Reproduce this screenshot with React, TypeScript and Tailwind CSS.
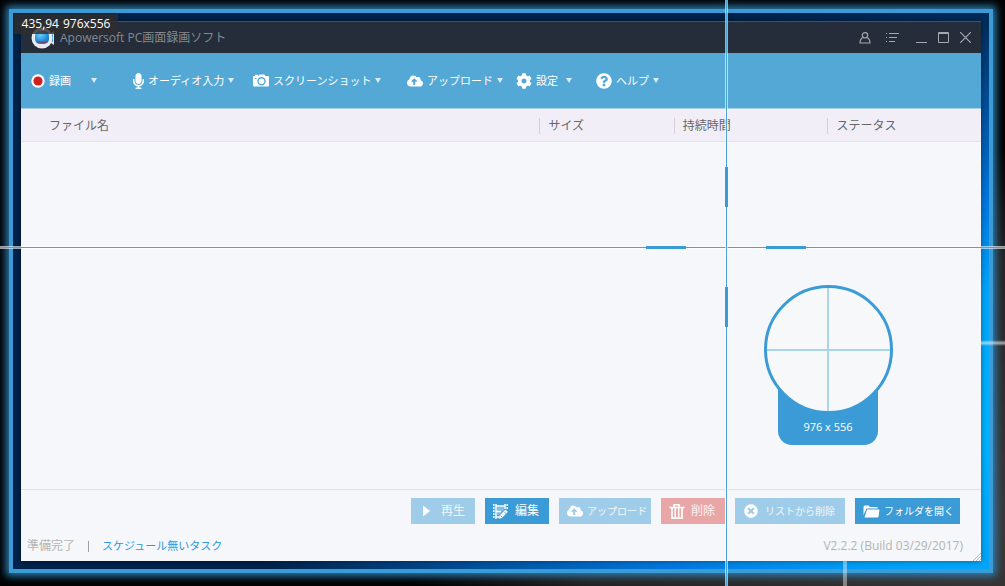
import type { ReactNode } from "react";
import { FaCloudUploadAlt, FaCog, FaMicrophone, FaQuestionCircle, FaTimesCircle } from "react-icons/fa";

const BLUE = "#3b9bd6";

function AppLogo() {
  return (
    <svg width="24" height="22" viewBox="0 0 24 22">
      <defs>
        <radialGradient id="lens" cx="0.4" cy="0.3" r="0.8">
          <stop offset="0" stopColor="#6fcdf8" />
          <stop offset="0.6" stopColor="#2590da" />
          <stop offset="1" stopColor="#1b66a8" />
        </radialGradient>
      </defs>
      <path d="M17 8.500 L23 4 V18 L17 14z" fill="#dfe6ee" />
      <path d="M19 9 L22 7 V15 L19 13z" fill="#2f93d4" />
      <circle cx="11" cy="11" r="10.500" fill="#e8ebf1" />
      <rect x="4" y="4" width="14" height="13" rx="5" fill="url(#lens)" />
      <path d="M6 15.500c3-1.500 7 .5 10-.5" stroke="#7d4a70" strokeWidth="1.500" fill="none" />
    </svg>
  );
}

function RecordIcon() {
  return (
    <svg width="14" height="14" viewBox="0 0 14 14">
      <circle cx="7" cy="7" r="6.700" fill="#fff" />
      <circle cx="7" cy="7" r="4.600" fill="#d2201f" />
    </svg>
  );
}

function CameraIcon() {
  return (
    <svg width="16" height="13" viewBox="0 0 16 13">
      <path
        fill="#fff"
        fillRule="evenodd"
        d="M1 2h1V.8h3V2h.5L6.500.500h5L12.500 2H15a1 1 0 0 1 1 1v8.500a1 1 0 0 1-1 1H1a1 1 0 0 1-1-1V3a1 1 0 0 1 1-1zM8.500 3a4.200 4.200 0 1 0 0 8.400a4.200 4.200 0 0 0 0-8.400zM2 4v1h1.500V4z"
      />
      <circle cx="8.500" cy="7.200" r="2.800" fill="#fff" />
    </svg>
  );
}

function PlayIcon() {
  return (
    <svg width="16" height="12" viewBox="0 0 16 12">
      <path d="M4 .5 L11 6 L4 11.500z" fill="#fff" />
    </svg>
  );
}

function FilmEditIcon() {
  return (
    <svg width="15" height="15" viewBox="0 0 15 15">
      <path d="M.8 0v15M14.200 0v6" stroke="#fff" strokeWidth="1.500" strokeDasharray="2 1" />
      <path d="M3 0v15M12 0v5" stroke="#fff" strokeWidth="1.500" />
      <path d="M3 2h9M3 7.500h5M3 13h3" stroke="#fff" strokeWidth="1.500" />
      <path d="M4 3h7v3L6 11H4z" fill="#fff" fillOpacity="0.350" />
      <path d="M12.500 5.500l2.300 2.200-5.800 6.300-3.200.8.700-3.300z" fill="#fff" />
      <path d="M7.500 11.500l2 2M11 7.500l2 2" stroke="#3b9bd6" strokeWidth="0.800" />
    </svg>
  );
}

function TrashIcon() {
  return (
    <svg width="16" height="15" viewBox="0 0 16 15" fill="none" stroke="#fff">
      <path d="M0.500 3.500h15" strokeWidth="1.600" />
      <path d="M5 3V.8h5V3" strokeWidth="1.500" />
      <path d="M3 3.500v10.700h10V3.500" strokeWidth="1.700" />
      <path d="M6.200 4v9M9.700 4v9" strokeWidth="1.500" />
    </svg>
  );
}

function FolderIcon() {
  return (
    <svg width="17" height="13" viewBox="0 0 17 13" fill="#fff">
      <path d="M.5 10V2a1.500 1.500 0 0 1 1.500-1.500h3.500L7 2h7.500v1.500H3.500z" />
      <path d="M4 4.500h12.500l-1 7.200a1 1 0 0 1-1 .8H1.500z" />
    </svg>
  );
}

type MenuProps = { icon: ReactNode; label: string; slot: string; arrow?: string };

function MenuButton({ icon, label, slot, arrow = "ml-1" }: MenuProps) {
  return (
    <div className={`shrink-0 ${slot}`}>
      <button className="flex items-center whitespace-nowrap text-[11px] leading-4 text-white">
        <span className="mr-1 flex">{icon}</span>
        {label}
        <svg className={arrow} width="6" height="5" viewBox="0 0 6 5">
          <path d="M0 0h6L3 5z" fill="#d9edf8" />
        </svg>
      </button>
    </div>
  );
}

type ActionProps = { icon: ReactNode; label: string; look: string; disabled?: boolean };

function ActionButton({ icon, label, look, disabled }: ActionProps) {
  return (
    <button
      disabled={disabled}
      className={`flex h-[26px] shrink-0 items-center justify-between whitespace-nowrap pl-2 leading-4 ${look}`}
    >
      {icon}
      {label}
    </button>
  );
}

function TitleBar() {
  return (
    <header className="flex h-8 items-center border-t border-[#48505b] bg-[#242d39] pl-[10px] pr-[10px] text-xs text-[#858a90]">
      <AppLogo />
      <h1 className="ml-[5px] flex-1 leading-4">Apowersoft PC画面録画ソフト</h1>
      <div className="flex items-center gap-[11px]">
        <button aria-label="アカウント" className="mr-1">
          <svg width="12" height="12" viewBox="0 0 12 12" fill="none" stroke="#a4a9af" strokeWidth="1.200">
            <circle cx="6" cy="3.300" r="2.700" />
            <path d="M4 5.500C2 6.500 1 8 1 11h10c0-3-1-4.500-3-5.500" />
          </svg>
        </button>
        <button aria-label="メニュー" className="mr-1.5">
          <svg width="13" height="11" viewBox="0 0 13 11" stroke="#a4a9af">
            <path d="M0 1.500h1M3 1.500h10M0 5.500h1M3 5.500h8M0 9.500h1M3 9.500h6" />
          </svg>
        </button>
        <button aria-label="最小化">
          <svg width="11" height="11" viewBox="0 0 11 11" stroke="#a4a9af">
            <path d="M0 10.500h11" />
          </svg>
        </button>
        <button aria-label="最大化">
          <svg width="11" height="11" viewBox="0 0 11 11" fill="none" stroke="#a4a9af">
            <path d="M.5.5h10v10H.5zM0 1.500h11" />
          </svg>
        </button>
        <button aria-label="閉じる">
          <svg width="11" height="11" viewBox="0 0 11 11" stroke="#a4a9af" strokeWidth="1.200">
            <path d="M0 0l11 11M11 0L0 11" />
          </svg>
        </button>
      </div>
    </header>
  );
}

function Toolbar() {
  return (
    <nav className="flex h-14 items-center border-b border-[#a9d0e3] bg-[#54a8d6] pl-[10px]">
      <MenuButton slot="w-[102px]" icon={<RecordIcon />} label="録画" arrow="ml-5" />
      <MenuButton slot="w-[120px]" icon={<FaMicrophone className="h-4 w-[11px]" />} label="オーディオ入力" />
      <MenuButton slot="w-[154px]" icon={<CameraIcon />} label="スクリーンショット" />
      <MenuButton slot="w-[109px]" icon={<FaCloudUploadAlt className="h-4 w-4" />} label="アップロード" />
      <MenuButton slot="w-[80px]" icon={<FaCog className="h-4 w-4" />} label="設定" arrow="ml-2" />
      <MenuButton slot="w-[80px]" icon={<FaQuestionCircle className="h-4 w-4" />} label="ヘルプ" />
    </nav>
  );
}

function FileTable() {
  const columns = [
    { label: "サイズ", width: "w-[14%]" },
    { label: "持続時間", width: "w-[16%]" },
    { label: "ステータス", width: "w-[16%]" },
  ];
  return (
    <main className="flex-1">
      <table className="w-full table-fixed text-left text-xs text-[#666]">
        <thead>
          <tr className="h-8 border-b border-[#dbe5ec] bg-[#f1eef8]">
            <th className="p-0 pl-7 pt-0.5 font-normal">ファイル名</th>
            {columns.map((c) => (
              <th key={c.label} className={`p-0 pt-0.5 font-normal ${c.width}`}>
                <div className="border-l border-[#d2d2d6] pl-2 leading-4">{c.label}</div>
              </th>
            ))}
          </tr>
        </thead>
      </table>
    </main>
  );
}

function Footer() {
  const soft = "bg-[#9fcce8] text-white/85";
  return (
    <footer className="border-t border-[#dbe4e9] pt-2">
      <div className="flex justify-end gap-[10px] pr-[21px]">
        <ActionButton disabled look={`w-16 pr-[10px] text-xs ${soft}`} icon={<PlayIcon />} label="再生" />
        <ActionButton look="w-16 bg-[#3b9bd6] pr-[10px] text-xs text-white" icon={<FilmEditIcon />} label="編集" />
        <ActionButton disabled look={`w-[92px] pr-1 text-[10px] ${soft}`} icon={<FaCloudUploadAlt className="h-4 w-4 text-white" />} label="アップロード" />
        <ActionButton disabled look="w-16 bg-[#e8a6a6] pr-[10px] text-xs text-white/85" icon={<TrashIcon />} label="削除" />
        <ActionButton disabled look={`w-[110px] pr-[10px] text-[10px] ${soft}`} icon={<FaTimesCircle className="h-[14px] w-4 text-white" />} label="リストから削除" />
        <ActionButton look="w-[105px] pr-1.5 bg-[#3b9bd6] text-[10px] text-white" icon={<FolderIcon />} label="フォルダを開く" />
      </div>
      <div className="flex items-center px-[6px] pb-[7px] pt-[14px] text-xs leading-4 text-[#b4b4b4]">
        <span>準備完了</span>
        <span className="mx-[13px] h-[11px] w-px bg-[#a0a0a0]" />
        <a href="#schedule" className="text-[11px] text-[#2f96dc]">スケジュール無いタスク</a>
        <span className="ml-auto mr-3">V2.2.2 (Build 03/29/2017)</span>
      </div>
      <svg className="absolute bottom-0 right-0" width="8" height="8" viewBox="0 0 8 8" stroke="#b5b8bd">
        <path d="M0 8L8 0M3 8L8 3M6 8L8 6" />
      </svg>
    </footer>
  );
}

// full-screen guides with thick ticks round the cursor
function Crosshair() {
  return (
    <>
      <div className="absolute inset-x-0 top-[247px] h-px bg-[#4ba4d6] shadow-[0_-1px_rgba(255,255,255,0.6),0_1px_rgba(255,255,255,0.6)]" />
      <div className="absolute inset-y-0 left-[726px] w-px bg-[#4ba4d6] shadow-[-1px_0_rgba(255,255,255,0.6),1px_0_rgba(255,255,255,0.6)]" />
      <div className="absolute left-[646px] top-[246px] flex h-[3px] w-40 justify-between">
        <div className="w-10 bg-[#3b9bd6]" />
        <div className="w-10 bg-[#3b9bd6]" />
      </div>
      <div className="absolute left-[725px] top-[167px] flex h-40 w-[3px] flex-col justify-between">
        <div className="h-10 bg-[#3b9bd6]" />
        <div className="h-10 bg-[#3b9bd6]" />
      </div>
    </>
  );
}

function Magnifier() {
  return (
    <div className="absolute left-[764px] top-[285px] w-32">
      <svg className="block" width="129" height="160" viewBox="0 0 129 160">
        <path d="M14 95h100v51a14 14 0 0 1-14 14H28a14 14 0 0 1-14-14z" fill={BLUE} />
        <circle cx="64.500" cy="64.500" r="63" fill="#f6f8fa" stroke={BLUE} strokeWidth="3" />
        <path d="M3 65h123M64 3v124" stroke="#4ba8d6" strokeOpacity="0.450" strokeWidth="2" />
      </svg>
      <div className="absolute inset-x-0 bottom-[10px] text-center text-[11px] leading-4 text-white">976 x 556</div>
    </div>
  );
}

export default function App() {
  return (
    <div className="relative flex min-h-screen overflow-hidden bg-[radial-gradient(ellipse_60%_65%_at_100%_90%,#3b3838_0%,#242323_70%,#000_100%)] pb-[13px] pl-[9px] pr-3 pt-[9px] font-['Open_Sans','Noto_Sans_CJK_JP',sans-serif]">
      {/* light beams of the desktop wallpaper */}
      <div className="absolute right-0 top-[340px] z-10 h-1.5 w-6 bg-linear-to-b from-transparent via-white/60 to-transparent" />
      <div className="absolute bottom-0 left-[843px] z-10 h-[25px] w-1 bg-white/40" />
      <div className="flex flex-1 border-4 border-[#3b9bd6] bg-[radial-gradient(ellipse_78%_78%_at_100%_75%,#00b2ff_0%,#00a5fa_32%,#0078e0_52%,#004a90_78%,#00224b_100%)] p-2 shadow-[0_0_8px_3px_#2e7fb2]">
        <div className="relative flex min-w-0 flex-1 flex-col bg-[#f5f7fa] shadow-[0_0_6px_rgba(0,0,0,0.4)]">
          <TitleBar />
          <Toolbar />
          <FileTable />
          <Footer />
        </div>
      </div>
      <Crosshair />
      <Magnifier />
      <div className="absolute left-[14px] top-[14px] flex h-5 w-[104px] items-center justify-center gap-1 bg-[#2f2d2d]/80 text-xs leading-4 text-white">
        <span>435,94</span>
        <span>976x556</span>
      </div>
    </div>
  );
}
